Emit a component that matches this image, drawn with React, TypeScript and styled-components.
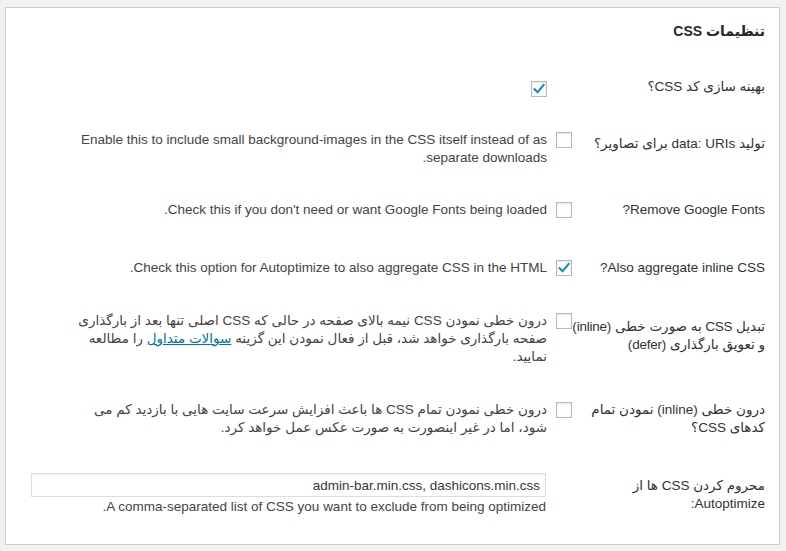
import React from "react";
import styled, { createGlobalStyle } from "styled-components";

const GlobalStyle = createGlobalStyle`
  html, body {
    margin: 0;
    padding: 0;
    background: #f1f1f1;
    font-family: "Liberation Sans", "DejaVu Sans", sans-serif;
    font-size: 13.5px;
    color: #444;
  }
`;

const Panel = styled.section`
  box-sizing: border-box;
  margin: 7px 0 0 5px;
  width: 775px;
  height: 538px;
  background: #fff;
  border: 1px solid #ccc;
  box-shadow: 0 1px 1px rgba(0, 0, 0, 0.04);
  direction: rtl;
  padding: 14px 14px 0 24px;
  display: flex;
  flex-direction: column;
`;

const Title = styled.h2`
  margin: 0;
  font-size: 14px;
  font-weight: 700;
  line-height: 18px;
  color: #23282d;
`;

const Row = styled.div<{ $gap: number }>`
  display: grid;
  grid-template-columns: 193px 1fr;
  align-items: start;
  padding-top: ${(p) => p.$gap}px;
`;

const Label = styled.div<{ $shift: number; $tight?: boolean }>`
  margin-top: ${(p) => p.$shift}px;
  line-height: 18px;
  font-size: 13.5px;
  font-weight: 400;
  color: #2f3338;
  white-space: nowrap;
  letter-spacing: ${(p) => (p.$tight ? "-0.25px" : "normal")};
`;

const Control = styled.div<{ $indent?: boolean }>`
  display: flex;
  align-items: flex-start;
  gap: 9px;
  padding-right: ${(p) => (p.$indent ? 25 : 0)}px;
`;

const Box = styled.span<{ $checked?: boolean }>`
  box-sizing: border-box;
  flex: 0 0 16px;
  width: 16px;
  height: 16px;
  margin-top: 1px;
  border: 1px solid #b4b9be;
  background: #fff;
  box-shadow: inset 0 1px 2px rgba(0, 0, 0, 0.1);
  display: flex;
  align-items: center;
  justify-content: center;
`;

const Desc = styled.div`
  line-height: 18px;
  font-size: 13.5px;
  color: #444;
  max-width: 516px;
`;

const Field = styled.div`
  display: flex;
  flex-direction: column;
  align-items: flex-start;
  gap: 1px;
  padding-right: 26px;
`;

const TextInput = styled.input`
  box-sizing: border-box;
  width: 515px;
  height: 24px;
  margin: 0;
  padding: 0 5px;
  border: 1px solid #ddd;
  box-shadow: inset 0 1px 2px rgba(0, 0, 0, 0.07);
  background: #fff;
  color: #32373c;
  font-family: "Liberation Sans", "DejaVu Sans", sans-serif;
  font-size: 13.5px;
  direction: rtl;
  text-align: right;
  outline: none;
`;

const Link = styled.a`
  color: #0073aa;
  text-decoration: underline;
`;

function Check({ checked }: { checked?: boolean }) {
  return (
    <Box $checked={checked}>
      {checked && (
        <svg width="14" height="14" viewBox="0 0 14 14">
          <path
            d="M2.6 7.2 L5.6 10.2 L11.6 3"
            fill="none"
            stroke="#1e8cbe"
            strokeWidth="2.2"
            strokeLinecap="square"
          />
        </svg>
      )}
    </Box>
  );
}

export default function App() {
  return (
    <>
      <GlobalStyle />
      <Panel>
        <Title>تنظیمات CSS</Title>

        <Row $gap={40}>
          <Label $shift={-2}>بهینه سازی کد CSS؟</Label>
          <Control $indent>
            <Check checked />
          </Control>
        </Row>

        <Row $gap={34}>
          <Label $shift={4}>تولید data: URIs برای تصاویر؟</Label>
          <Control>
            <Check />
            <Desc>
              Enable this to include small background-images in the CSS itself instead of as
              <br />
              separate downloads.
            </Desc>
          </Control>
        </Row>

        <Row $gap={34}>
          <Label $shift={0}>Remove Google Fonts?</Label>
          <Control>
            <Check />
            <Desc>Check this if you don't need or want Google Fonts being loaded.</Desc>
          </Control>
        </Row>

        <Row $gap={40}>
          <Label $shift={0}>Also aggregate inline CSS?</Label>
          <Control>
            <Check checked />
            <Desc>Check this option for Autoptimize to also aggregate CSS in the HTML.</Desc>
          </Control>
        </Row>

        <Row $gap={35}>
          <Label $shift={6} $tight>
            تبدیل CSS به صورت خطی (inline)
            <br />
            و تعویق بارگذاری (defer)
          </Label>
          <Control>
            <Check />
            <Desc>
              درون خطی نمودن CSS نیمه بالای صفحه در حالی که CSS اصلی تنها بعد از بارگذاری
              <br />
              صفحه بارگذاری خواهد شد، قبل از فعال نمودن این گزینه{" "}
              <Link href="#">سوالات متداول</Link> را مطالعه
              <br />
              نمایید.
            </Desc>
          </Control>
        </Row>

        <Row $gap={35}>
          <Label $shift={0}>
            درون خطی (inline) نمودن تمام
            <br />
            کدهای CSS؟
          </Label>
          <Control>
            <Check />
            <Desc>
              درون خطی نمودن تمام CSS ها باعث افزایش سرعت سایت هایی با بازدید کم می
              <br />
              شود، اما در غیر اینصورت به صورت عکس عمل خواهد کرد.
            </Desc>
          </Control>
        </Row>

        <Row $gap={36}>
          <Label $shift={4}>
            محروم کردن CSS ها از
            <br />
            Autoptimize:
          </Label>
          <Field>
            <TextInput defaultValue="admin-bar.min.css, dashicons.min.css" />
            <Desc>A comma-separated list of CSS you want to exclude from being optimized.</Desc>
          </Field>
        </Row>
      </Panel>
    </>
  );
}
